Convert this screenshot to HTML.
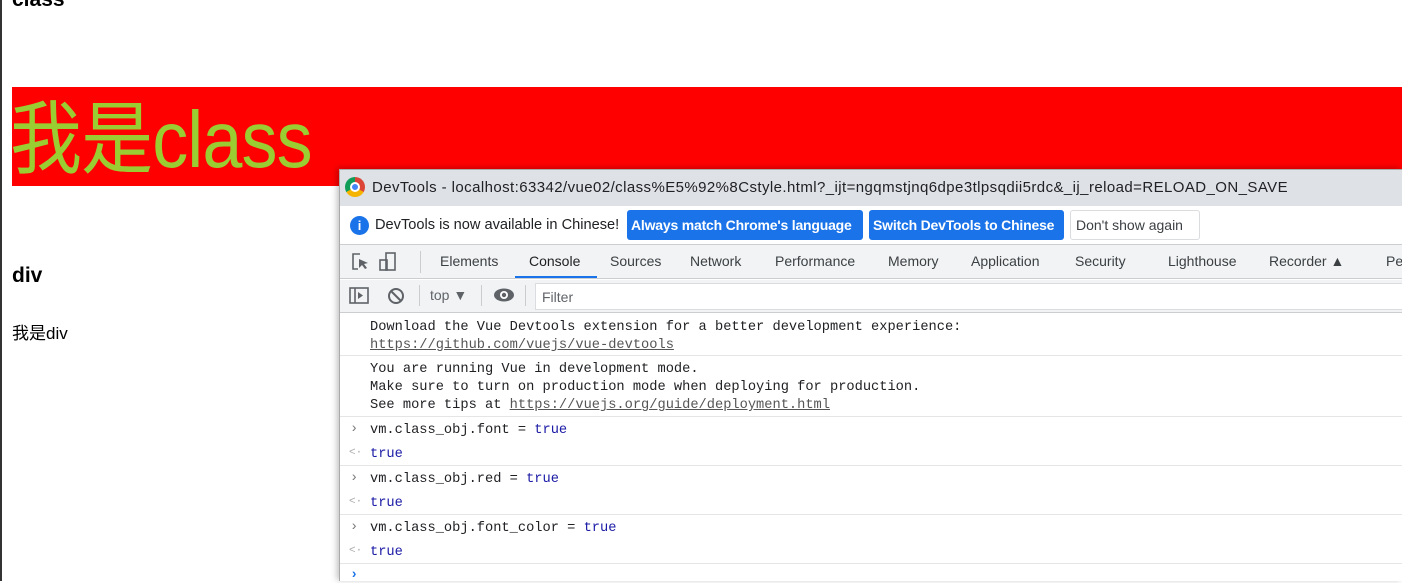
<!DOCTYPE html>
<html><head><meta charset="utf-8"><style>
*{margin:0;padding:0;box-sizing:border-box}
body{width:1402px;height:581px;overflow:hidden;background:#fff;font-family:"Liberation Sans","Noto Sans CJK SC",sans-serif;position:relative}
.a{position:absolute;white-space:nowrap}
.mono{font-family:"Liberation Mono","DejaVu Sans Mono",monospace;font-size:13.7px;color:#202124}
.sep{position:absolute;left:340px;right:0;height:1px;background:#e5e5e5}
.btn{position:absolute;top:210px;height:30px;background:#1a73e8;color:#fff;font-size:14px;font-weight:bold;line-height:30px;padding:0 4px;border-radius:3px;letter-spacing:-0.2px}
.tab{position:absolute;top:253px;font-size:14px;color:#3c4043}
</style></head><body>
<div class="a" style="left:0;top:0;width:2px;height:581px;background:#333"></div>
<div class="a" style="left:12px;top:-12px;font-size:21px;font-weight:bold">class</div>
<div class="a" style="left:12px;top:87px;width:1390px;height:99px;background:#f00"></div>
<div class="a" style="left:10px;top:92px;font-size:80px;line-height:96px;color:#9acd32;letter-spacing:-1px;transform:scaleX(0.9);transform-origin:left">我是class</div>
<div class="a" style="left:12px;top:264px;font-size:21px;font-weight:bold">div</div>
<div class="a" style="left:12px;top:319px;font-size:17px">我是div</div>

<div class="a" style="left:339px;top:169px;width:1063px;height:412px;background:#fff;border-left:1px solid #aaa;border-top:1px solid #aaa;box-shadow:-2px -1px 6px rgba(0,0,0,.25)"></div>
<div class="a" style="left:340px;top:170px;width:1062px;height:36px;background:#dee1e6"></div>
<div class="a" style="left:345px;top:177px;width:20px;height:20px;border-radius:50%;background:conic-gradient(#db4437 0 120deg,#f4b400 120deg 240deg,#0f9d58 240deg)"></div>
<div class="a" style="left:350px;top:182px;width:10px;height:10px;border-radius:50%;background:#4285f4;border:2px solid #fff"></div>
<div class="a" style="left:372px;top:179px;font-size:15px;color:#202124;letter-spacing:0.42px">DevTools - localhost:63342/vue02/class%E5%92%8Cstyle.html?_ijt=ngqmstjnq6dpe3tlpsqdii5rdc&amp;_ij_reload=RELOAD_ON_SAVE</div>
<div class="a" style="left:340px;top:244px;width:1062px;height:1px;background:#cbcdd1"></div>
<div class="a" style="left:350px;top:216px;width:19px;height:19px;border-radius:50%;background:#1a73e8;color:#fff;font-size:13px;font-weight:bold;text-align:center;line-height:19px">i</div>
<div class="a" style="left:375px;top:217px;font-size:14.6px;color:#202124">DevTools is now available in Chinese!</div>
<div class="btn" style="left:627px;width:236px">Always match Chrome's language</div>
<div class="btn" style="left:869px;width:195px">Switch DevTools to Chinese</div>
<div class="a" style="left:1070px;top:210px;width:130px;height:30px;border:1px solid #dadce0;border-radius:3px;font-size:14px;color:#3c4043;line-height:28px;padding-left:5px">Don't show again</div>

<div class="a" style="left:340px;top:245px;width:1062px;height:34px;background:#f1f3f4;border-bottom:1px solid #cbcdd1"></div>
<svg class="a" style="left:350px;top:251px" width="60" height="22"><path d="M10 3H3v15h5" fill="none" stroke="#5f6368" stroke-width="1.6"/><path d="M9 8l9 4-4 1 3 4-2 1-3-4-3 3z" fill="#5f6368"/><rect x="36" y="2" width="9" height="17" fill="none" stroke="#5f6368" stroke-width="1.6"/><rect x="30" y="9" width="7" height="10" fill="none" stroke="#5f6368" stroke-width="1.6"/></svg>
<div class="a" style="left:420px;top:251px;width:1px;height:22px;background:#ccc"></div>
<div class="tab" style="left:440px">Elements</div>
<div class="tab" style="left:529px;color:#202124">Console</div>
<div class="a" style="left:515px;top:276px;width:82px;height:2px;background:#1a73e8"></div>
<div class="tab" style="left:610px">Sources</div>
<div class="tab" style="left:690px">Network</div>
<div class="tab" style="left:775px">Performance</div>
<div class="tab" style="left:888px">Memory</div>
<div class="tab" style="left:971px">Application</div>
<div class="tab" style="left:1075px">Security</div>
<div class="tab" style="left:1168px">Lighthouse</div>
<div class="tab" style="left:1269px">Recorder ▲</div>
<div class="tab" style="left:1386px">Pe</div>

<div class="a" style="left:340px;top:280px;width:1062px;height:33px;background:#f1f3f4;border-bottom:1px solid #cbcdd1"></div>
<svg class="a" style="left:349px;top:286px" width="120" height="20"><rect x="1" y="2" width="18" height="15" fill="none" stroke="#5f6368" stroke-width="1.6"/><line x1="6" y1="2" x2="6" y2="17" stroke="#5f6368" stroke-width="1.6"/><path d="M9 6l5 3.5-5 3.5z" fill="#5f6368"/><circle cx="47" cy="10" r="7" fill="none" stroke="#5f6368" stroke-width="2"/><line x1="42" y1="5" x2="52" y2="15" stroke="#5f6368" stroke-width="2"/></svg>
<div class="a" style="left:419px;top:285px;width:1px;height:21px;background:#ccc"></div>
<div class="a" style="left:430px;top:287px;font-size:14px;color:#5f6368">top ▼</div>
<div class="a" style="left:481px;top:285px;width:1px;height:21px;background:#ccc"></div>
<svg class="a" style="left:493px;top:287px" width="22" height="16"><ellipse cx="11" cy="8" rx="10" ry="6.5" fill="#5f6368"/><circle cx="11" cy="8" r="4" fill="#fff"/><circle cx="11" cy="8" r="2.2" fill="#5f6368"/></svg>
<div class="a" style="left:525px;top:285px;width:1px;height:21px;background:#ccc"></div>
<div class="a" style="left:535px;top:283px;width:867px;height:27px;background:#fff;border:1px solid #dadce0;border-right:none;font-size:14px;color:#5f6368;padding:5px 0 0 6px">Filter</div>

<div class="a mono" style="left:370px;top:319px;line-height:18px">Download the Vue Devtools extension for a better development experience:<br><span style="color:#555;text-decoration:underline">https://github.com/vuejs/vue-devtools</span></div>
<div class="sep" style="top:355px"></div>
<div class="a mono" style="left:370px;top:361px;line-height:18px">You are running Vue in development mode.<br>Make sure to turn on production mode when deploying for production.<br>See more tips at <span style="color:#555;text-decoration:underline">https://vuejs.org/guide/deployment.html</span></div>
<div class="sep" style="top:416px"></div>
<div class="a mono" style="left:350px;top:422px;color:#777">›</div><div class="a mono" style="left:370px;top:423px">vm.class_obj.font = <span style="color:#1a1aa6">true</span></div>
<div class="a mono" style="left:349px;top:447px;color:#aaa;font-size:11px">&lt;·</div><div class="a mono" style="left:370px;top:447px;color:#1a1aa6">true</div>
<div class="sep" style="top:465px"></div>
<div class="a mono" style="left:350px;top:471px;color:#777">›</div><div class="a mono" style="left:370px;top:472px">vm.class_obj.red = <span style="color:#1a1aa6">true</span></div>
<div class="a mono" style="left:349px;top:496px;color:#aaa;font-size:11px">&lt;·</div><div class="a mono" style="left:370px;top:496px;color:#1a1aa6">true</div>
<div class="sep" style="top:514px"></div>
<div class="a mono" style="left:350px;top:520px;color:#777">›</div><div class="a mono" style="left:370px;top:521px">vm.class_obj.font_color = <span style="color:#1a1aa6">true</span></div>
<div class="a mono" style="left:349px;top:545px;color:#aaa;font-size:11px">&lt;·</div><div class="a mono" style="left:370px;top:545px;color:#1a1aa6">true</div>
<div class="sep" style="top:563px"></div>
<div class="a mono" style="left:350px;top:568px;color:#1a73e8;font-weight:bold">›</div>
</body></html>
